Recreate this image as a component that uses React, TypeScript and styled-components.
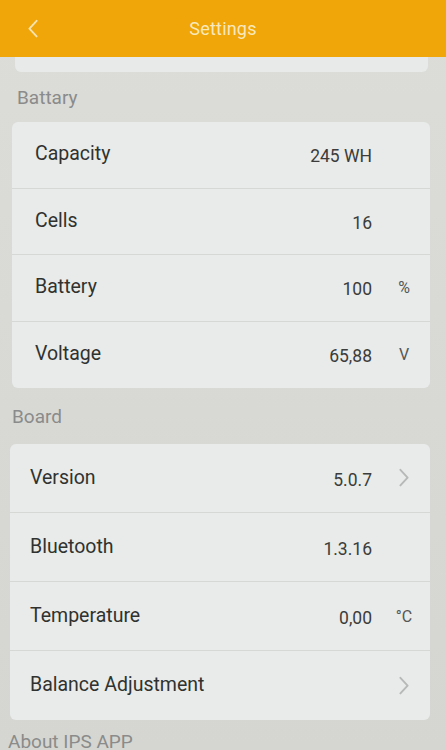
import React from "react";
import styled, { createGlobalStyle } from "styled-components";

const GlobalStyle = createGlobalStyle`
  html, body {
    margin: 0;
    padding: 0;
    background: #d7d8d4;
    font-family: Roboto, "Noto Sans", Arial, sans-serif;
  }
  #root {
    height: 750px;
    overflow: hidden;
  }
`;

type Row = {
  label: string;
  value?: string;
  unit?: string;
  arrow?: boolean;
};

const battery: Row[] = [
  { label: "Capacity", value: "245 WH" },
  { label: "Cells", value: "16" },
  { label: "Battery", value: "100", unit: "%" },
  { label: "Voltage", value: "65,88", unit: "V" },
];

const board: Row[] = [
  { label: "Version", value: "5.0.7", arrow: true },
  { label: "Bluetooth", value: "1.3.16" },
  { label: "Temperature", value: "0,00", unit: "°C" },
  { label: "Balance Adjustment", arrow: true },
];

const Screen = styled.div`
  display: flex;
  flex-direction: column;
  height: 750px;
  background: linear-gradient(180deg, #dcdcd8 0%, #d8d9d5 55%, #d5d6d1 100%);
`;

const Header = styled.header`
  height: 57px;
  flex-shrink: 0;
  display: grid;
  grid-template-columns: 60px 1fr 60px;
  align-items: center;
  background: #f0a508;
`;

const Back = styled.div`
  display: flex;
  align-items: center;
  justify-content: center;
  padding-left: 6px;
`;

const Title = styled.h1`
  margin: 0;
  text-align: center;
  font-size: 18px;
  font-weight: 400;
  color: #f8e9bd;
  letter-spacing: 0.2px;
`;

const Remnant = styled.div`
  height: 15px;
  flex-shrink: 0;
  margin: 0 18px 0 15px;
  background: #e7eae8;
  border-radius: 0 0 6px 6px;
`;

const SectionLabel = styled.div<{ $inset: number; $h: number }>`
  height: ${(p) => p.$h}px;
  flex-shrink: 0;
  display: flex;
  align-items: center;
  padding-left: ${(p) => p.$inset}px;
  font-size: 19px;
  color: #8a8b8a;
`;

const Card = styled.div<{ $left: number }>`
  margin: 0 16px 0 ${(p) => p.$left}px;
  flex-shrink: 0;
  background: #e8ebe9;
  border-radius: 6px;
  overflow: hidden;
`;

const RowBox = styled.div<{ $h: number; $pad: number }>`
  height: ${(p) => p.$h}px;
  display: flex;
  align-items: center;
  padding-left: ${(p) => p.$pad}px;
  border-bottom: 1px solid #d5d8d5;
  box-sizing: border-box;
  &:last-child {
    border-bottom: none;
  }
`;

const Label = styled.span`
  flex: 1;
  font-size: 19.5px;
  color: #303230;
  margin-top: -2px;
`;

const Value = styled.span`
  font-size: 17.5px;
  color: #3b3c3b;
  margin-top: 3px;
  margin-right: 6px;
`;

const Unit = styled.span`
  width: 52px;
  display: flex;
  justify-content: center;
  font-size: 16px;
  color: #555755;
`;

const About = styled.div`
  margin-top: 10px;
  padding-left: 8px;
  height: 22px;
  flex-shrink: 0;
  font-size: 19px;
  line-height: 24px;
  color: #8a8b8a;
  border-bottom: 2px solid #5e605e;
  overflow: hidden;
`;

const Chevron: React.FC<{ color: string; size: number; left?: boolean }> = ({ color, size, left }) => (
  <svg width={size} height={size * 1.6} viewBox="0 0 10 16" fill="none">
    <path
      d={left ? "M8 1.5L2 8l6 6.5" : "M2 1.5L8 8l-6 6.5"}
      stroke={color}
      strokeWidth={1.6}
      strokeLinecap="round"
      strokeLinejoin="round"
    />
  </svg>
);

const Section: React.FC<{ rows: Row[]; left: number; rowH: number; pad: number }> = ({
  rows,
  left,
  rowH,
  pad,
}) => (
  <Card $left={left}>
    {rows.map((r) => (
      <RowBox key={r.label} $h={rowH} $pad={pad}>
        <Label>{r.label}</Label>
        {r.value && <Value>{r.value}</Value>}
        <Unit>
          {r.unit}
          {r.arrow && <Chevron color="#b6b9b7" size={12} />}
        </Unit>
      </RowBox>
    ))}
  </Card>
);

const App: React.FC = () => {
  return (
    <>
      <GlobalStyle />
      <Screen>
        <Header>
          <Back>
            <Chevron color="#f6e3b0" size={12} left />
          </Back>
          <Title>Settings</Title>
          <div />
        </Header>
        <Remnant />
        <SectionLabel $inset={17} $h={50}>
          Battary
        </SectionLabel>
        <Section rows={battery} left={12} rowH={66.5} pad={23} />
        <SectionLabel $inset={12} $h={56}>
          Board
        </SectionLabel>
        <Section rows={board} left={10} rowH={69} pad={20} />
        <About>About IPS APP</About>
      </Screen>
    </>
  );
};

export default App;
